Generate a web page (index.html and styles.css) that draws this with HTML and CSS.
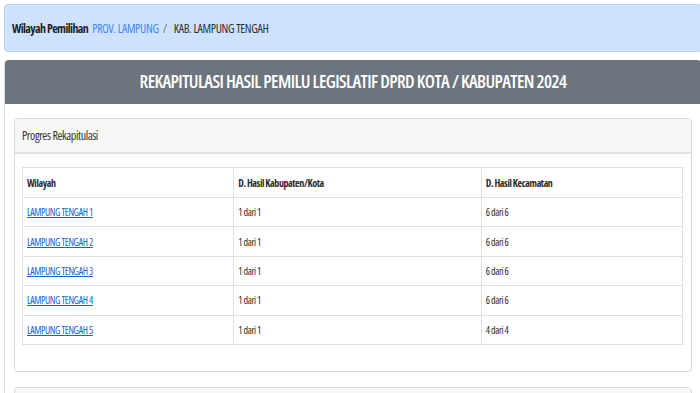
FILE: index.html
```html
<!DOCTYPE html>
<html lang="id">
<head>
    <meta charset="utf-8">
    <title>Rekapitulasi Hasil Pemilu</title>
    <link rel="stylesheet" href="styles.css">
</head>
<body>
    <!-- Breadcrumb wilayah -->
    <nav class="breadcrumb">
        <strong>Wilayah Pemilihan</strong>
        <a href="#" class="crumb-link">PROV. LAMPUNG</a>
        <span class="crumb-sep">/</span>
        <span>KAB. LAMPUNG TENGAH</span>
    </nav>

    <!-- Main panel -->
    <div class="panel">
        <div class="panel-title">
            <h1>REKAPITULASI HASIL PEMILU LEGISLATIF DPRD KOTA / KABUPATEN 2024</h1>
        </div>

        <div class="panel-body">
            <div class="card">
                <div class="card-header">Progres Rekapitulasi</div>
                <div class="card-body">
                    <table class="progress-table">
                        <thead>
                            <tr>
                                <th class="col-wilayah">Wilayah</th>
                                <th class="col-kab">D. Hasil Kabupaten/Kota</th>
                                <th class="col-kec">D. Hasil Kecamatan</th>
                            </tr>
                        </thead>
                        <tbody>
                            <tr>
                                <td><a href="#">LAMPUNG TENGAH 1</a></td>
                                <td>1 dari 1</td>
                                <td>6 dari 6</td>
                            </tr>
                            <tr>
                                <td><a href="#">LAMPUNG TENGAH 2</a></td>
                                <td>1 dari 1</td>
                                <td>6 dari 6</td>
                            </tr>
                            <tr>
                                <td><a href="#">LAMPUNG TENGAH 3</a></td>
                                <td>1 dari 1</td>
                                <td>6 dari 6</td>
                            </tr>
                            <tr>
                                <td><a href="#">LAMPUNG TENGAH 4</a></td>
                                <td>1 dari 1</td>
                                <td>6 dari 6</td>
                            </tr>
                            <tr>
                                <td><a href="#">LAMPUNG TENGAH 5</a></td>
                                <td>1 dari 1</td>
                                <td>4 dari 4</td>
                            </tr>
                        </tbody>
                    </table>
                </div>
            </div>

            <div class="card">
                <div class="card-header">&nbsp;</div>
                <div class="card-body"></div>
            </div>
        </div>
    </div>
</body>
</html>
```

FILE: styles.css
```css
/* Base */
html, body {
    overflow: hidden;
}

body {
    margin: 0;
    padding: 4px 0 0 4px;
    width: 698px;
    background: #ffffff;
    color: #212529;
    font-family: 'Open Sans', sans-serif;
    font-stretch: 75%;
}

a {
    color: #1b5fd1;
}

/* Breadcrumb */
.breadcrumb {
    display: flex;
    align-items: center;
    gap: 4px;
    height: 46px;
    padding: 0 7px;
    background: #cfe2fd;
    border: 1px solid #b9d3f5;
    border-radius: 4px;
    font-size: 12px;
    letter-spacing: -0.3px;
    color: #2b2f33;
}

.breadcrumb strong {
    font-weight: 700;
    letter-spacing: -0.6px;
    color: #1f2326;
}

.crumb-link {
    color: #3f86f0;
    text-decoration: none;
}

.crumb-sep {
    color: #6c757d;
    margin-right: 3px;
}

/* Panel */
.panel {
    margin-top: 8px;
    border: 1px solid #dcdcdc;
    border-top: none;
    border-radius: 4px 4px 0 0;
}

.panel-title {
    background: #6c757d;
    height: 44px;
    display: flex;
    align-items: center;
    justify-content: center;
    border-radius: 4px 4px 0 0;
}

.panel-title h1 {
    margin: 0 0 2px;
    color: #ffffff;
    font-size: 18px;
    font-weight: 600;
    letter-spacing: -0.6px;
}

.panel-body {
    padding: 14px 9px 0 9px;
    display: flex;
    flex-direction: column;
    gap: 15px;
}

/* Card */
.card {
    border: 1px solid #dadada;
    border-radius: 4px;
    background: #ffffff;
}

.card-header {
    height: 33px;
    display: flex;
    align-items: center;
    padding: 0 7px;
    background: #f7f7f7;
    border-bottom: 2px solid #e2e2e2;
    border-radius: 4px 4px 0 0;
    font-size: 12px;
    letter-spacing: -0.4px;
    color: #333333;
}

.card-body {
    padding: 13px 8px 26px 7px;
}

/* Table */
.progress-table {
    width: 100%;
    border-collapse: collapse;
    font-size: 10px;
    letter-spacing: -0.4px;
    color: #2a2a2a;
}

.progress-table th,
.progress-table td {
    border: 1px solid #e0e0e0;
    padding: 0 4px;
    height: 28.4px;
    text-align: left;
}

.progress-table th {
    font-weight: 700;
    height: 29px;
}

.col-wilayah {
    width: 32%;
}

.col-kab {
    width: 37.5%;
}

.progress-table td a {
    color: #1b5fd1;
}
```
